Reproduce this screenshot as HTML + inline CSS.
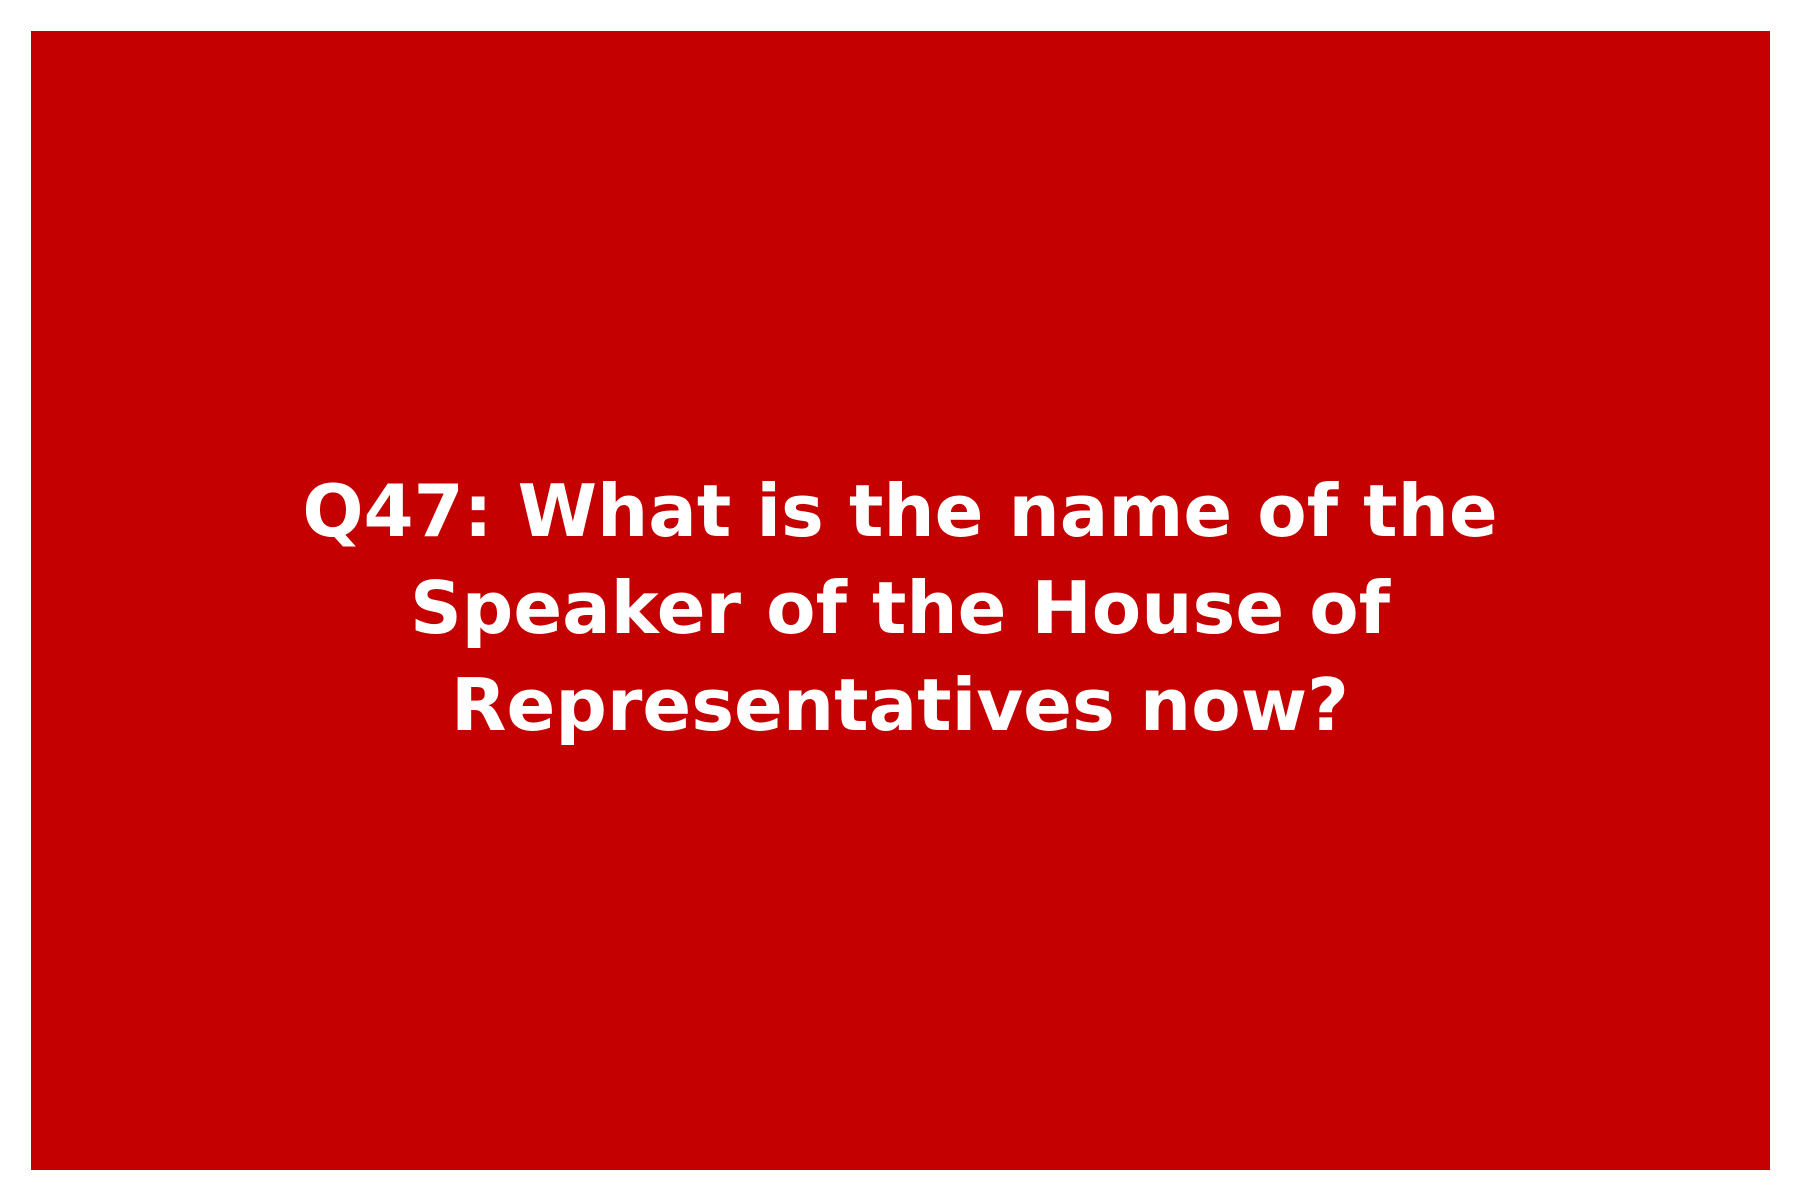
<!DOCTYPE html>
<html><head><meta charset="utf-8"><style>
html,body{margin:0;padding:0;background:#fff;width:1800px;height:1200px;overflow:hidden}
.r{position:absolute;left:31px;top:31px;width:1739px;height:1139px;background:#c40000}
.t{position:absolute;left:0;width:1800px;top:463px;text-align:center;color:#fff;font-family:"DejaVu Sans","Liberation Sans",sans-serif;font-weight:bold;font-size:72px;line-height:97px}
</style></head><body>
<div class="r"></div>
<div class="t">Q47: What is the name of the<br>Speaker of the House of<br>Representatives now?</div>
</body></html>
